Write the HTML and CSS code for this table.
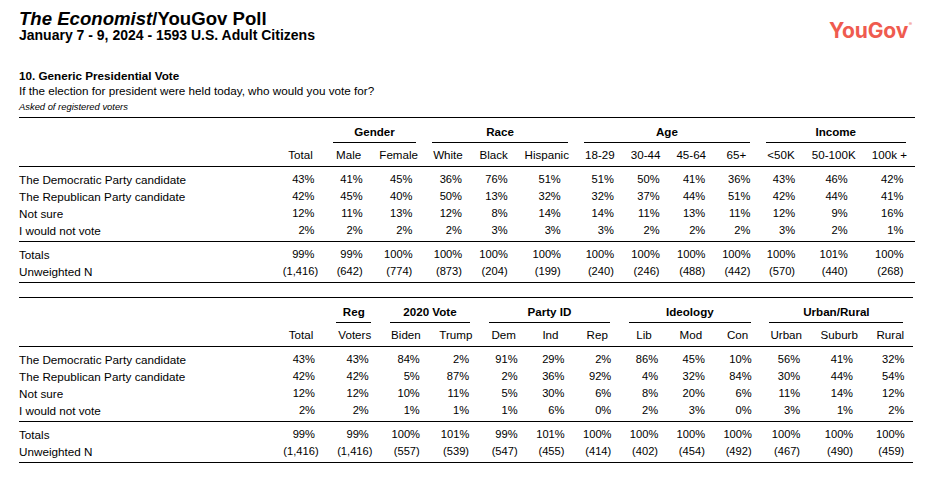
FILE: index.html
```html
<!DOCTYPE html>
<html lang="en">
<head>
<meta charset="utf-8">
<title>The Economist/YouGov Poll</title>
<link rel="stylesheet" href="styles.css">
</head>
<body>
<div class="page">
  <header class="top">
    <div class="titles">
      <h1 class="title"><i>The Economist</i>/YouGov Poll</h1>
      <div class="subtitle">January 7 - 9, 2024 - 1593 U.S. Adult Citizens</div>
    </div>
    <div class="logo">YouGov<span class="reg">®</span></div>
  </header>
  <h2 class="q-title">10. Generic Presidential Vote</h2>
  <p class="q-text">If the election for president were held today, who would you vote for?</p>
  <p class="q-note">Asked of registered voters</p>

  <section class="tbl t1">
    <div class="row grp">
      <div class="g c3-4">Gender</div>
      <div class="g c5-7">Race</div>
      <div class="g c8-11">Age</div>
      <div class="g c12-14">Income</div>
    </div>
    <div class="row hdr">
      <div></div><div>Total</div><div>Male</div><div>Female</div><div>White</div><div>Black</div><div>Hispanic</div><div>18-29</div><div>30-44</div><div>45-64</div><div>65+</div><div>&lt;50K</div><div>50-100K</div><div>100k +</div>
    </div>
    <div class="body">
      <div class="row"><div class="lab">The Democratic Party candidate</div><div class="c">43%</div><div class="c">41%</div><div class="c">45%</div><div class="c">36%</div><div class="c">76%</div><div class="c">51%</div><div class="c">51%</div><div class="c">50%</div><div class="c">41%</div><div class="c">36%</div><div class="c">43%</div><div class="c">46%</div><div class="c">42%</div></div>
      <div class="row"><div class="lab">The Republican Party candidate</div><div class="c">42%</div><div class="c">45%</div><div class="c">40%</div><div class="c">50%</div><div class="c">13%</div><div class="c">32%</div><div class="c">32%</div><div class="c">37%</div><div class="c">44%</div><div class="c">51%</div><div class="c">42%</div><div class="c">44%</div><div class="c">41%</div></div>
      <div class="row"><div class="lab">Not sure</div><div class="c">12%</div><div class="c">11%</div><div class="c">13%</div><div class="c">12%</div><div class="c">8%</div><div class="c">14%</div><div class="c">14%</div><div class="c">11%</div><div class="c">13%</div><div class="c">11%</div><div class="c">12%</div><div class="c">9%</div><div class="c">16%</div></div>
      <div class="row"><div class="lab">I would not vote</div><div class="c">2%</div><div class="c">2%</div><div class="c">2%</div><div class="c">2%</div><div class="c">3%</div><div class="c">3%</div><div class="c">3%</div><div class="c">2%</div><div class="c">2%</div><div class="c">2%</div><div class="c">3%</div><div class="c">2%</div><div class="c">1%</div></div>
    </div>
    <div class="foot">
      <div class="row"><div class="lab">Totals</div><div class="c">99%</div><div class="c">99%</div><div class="c">100%</div><div class="c">100%</div><div class="c">100%</div><div class="c">100%</div><div class="c">100%</div><div class="c">100%</div><div class="c">100%</div><div class="c">100%</div><div class="c">100%</div><div class="c">101%</div><div class="c">100%</div></div>
      <div class="row"><div class="lab">Unweighted N</div><div class="c">(1,416)</div><div class="c">(642)</div><div class="c">(774)</div><div class="c">(873)</div><div class="c">(204)</div><div class="c">(199)</div><div class="c">(240)</div><div class="c">(246)</div><div class="c">(488)</div><div class="c">(442)</div><div class="c">(570)</div><div class="c">(440)</div><div class="c">(268)</div></div>
    </div>
  </section>

  <section class="tbl t2">
    <div class="row grp">
      <div class="g c3-3">Reg</div>
      <div class="g c4-5">2020 Vote</div>
      <div class="g c6-8">Party ID</div>
      <div class="g c9-11">Ideology</div>
      <div class="g c12-14">Urban/Rural</div>
    </div>
    <div class="row hdr">
      <div></div><div>Total</div><div>Voters</div><div>Biden</div><div>Trump</div><div>Dem</div><div>Ind</div><div>Rep</div><div>Lib</div><div>Mod</div><div>Con</div><div>Urban</div><div>Suburb</div><div>Rural</div>
    </div>
    <div class="body">
      <div class="row"><div class="lab">The Democratic Party candidate</div><div class="c">43%</div><div class="c">43%</div><div class="c">84%</div><div class="c">2%</div><div class="c">91%</div><div class="c">29%</div><div class="c">2%</div><div class="c">86%</div><div class="c">45%</div><div class="c">10%</div><div class="c">56%</div><div class="c">41%</div><div class="c">32%</div></div>
      <div class="row"><div class="lab">The Republican Party candidate</div><div class="c">42%</div><div class="c">42%</div><div class="c">5%</div><div class="c">87%</div><div class="c">2%</div><div class="c">36%</div><div class="c">92%</div><div class="c">4%</div><div class="c">32%</div><div class="c">84%</div><div class="c">30%</div><div class="c">44%</div><div class="c">54%</div></div>
      <div class="row"><div class="lab">Not sure</div><div class="c">12%</div><div class="c">12%</div><div class="c">10%</div><div class="c">11%</div><div class="c">5%</div><div class="c">30%</div><div class="c">6%</div><div class="c">8%</div><div class="c">20%</div><div class="c">6%</div><div class="c">11%</div><div class="c">14%</div><div class="c">12%</div></div>
      <div class="row"><div class="lab">I would not vote</div><div class="c">2%</div><div class="c">2%</div><div class="c">1%</div><div class="c">1%</div><div class="c">1%</div><div class="c">6%</div><div class="c">0%</div><div class="c">2%</div><div class="c">3%</div><div class="c">0%</div><div class="c">3%</div><div class="c">1%</div><div class="c">2%</div></div>
    </div>
    <div class="foot">
      <div class="row"><div class="lab">Totals</div><div class="c">99%</div><div class="c">99%</div><div class="c">100%</div><div class="c">101%</div><div class="c">99%</div><div class="c">101%</div><div class="c">100%</div><div class="c">100%</div><div class="c">100%</div><div class="c">100%</div><div class="c">100%</div><div class="c">100%</div><div class="c">100%</div></div>
      <div class="row"><div class="lab">Unweighted N</div><div class="c">(1,416)</div><div class="c">(1,416)</div><div class="c">(557)</div><div class="c">(539)</div><div class="c">(547)</div><div class="c">(455)</div><div class="c">(414)</div><div class="c">(402)</div><div class="c">(454)</div><div class="c">(492)</div><div class="c">(467)</div><div class="c">(490)</div><div class="c">(459)</div></div>
    </div>
  </section>
</div>
</body>
</html>
```

FILE: styles.css
```css
html, body {
  margin: 0;
  background: #fff;
}
body {
  font-family: "Liberation Sans", Arial, Helvetica, sans-serif;
  color: #000;
}
.page {
  padding: 11px 0 0 19px;
  width: 896px;
}
.top {
  display: flex;
  justify-content: space-between;
  align-items: flex-start;
}
.title {
  margin: 0;
  font-size: 18.6px;
  line-height: 16.5px;
  font-weight: bold;
}
.subtitle {
  font-size: 14px;
  line-height: 14px;
  font-weight: bold;
}
.logo {
  margin-top: 10.4px;
  margin-right: 3px;
  font-family: Inter, "Liberation Sans", sans-serif;
  font-weight: 700;
  font-size: 21px;
  line-height: 20px;
  letter-spacing: -0.1px;
  color: #ef5b4f;
}
.reg {
  font-size: 5px;
  line-height: 0;
  vertical-align: 12px;
  margin-left: 0.5px;
  color: #f28a80;
}
.q-title {
  margin: 27.5px 0 0;
  font-size: 11.7px;
  line-height: 14px;
  font-weight: bold;
}
.q-text {
  margin: 0.5px 0 0;
  font-size: 11.7px;
  line-height: 14px;
}
.q-note {
  margin: 3.3px 0 0;
  font-size: 9.4px;
  line-height: 12px;
  font-style: italic;
}
.tbl {
  margin-top: 4.3px;
  border-top: 1px solid #000;
  border-bottom: 1px solid #000;
  width: 896px;
}
.t2 {
  width: 893.7px;
  margin-top: 14px;
}
.row {
  display: grid;
  align-items: start;
}
.t1 .row {
  grid-template-columns: 248.33px 35px 30px 38px 30px 30px 45px 30px 30px 30px 29px 29px 45px 35px;
  column-gap: 15.67px;
}
.t2 .row {
  grid-template-columns: 245.7px 35px 35px 29.4px 31.6px 28px 28px 28px 28px 28px 28px 31.3px 37px 28px;
  column-gap: 18.8px;
}
.grp {
  padding-top: 5px;
}
.g {
  margin: 0 1px 0 -1px;
  padding-bottom: 1.5px;
  border-bottom: 1px solid #000;
  font-weight: bold;
  font-size: 11.6px;
  line-height: 17px;
  text-align: center;
  white-space: nowrap;
}
.c3-3 { grid-column: 3 / 4; }
.c3-4 { grid-column: 3 / 5; }
.c4-5 { grid-column: 4 / 6; }
.c5-7 { grid-column: 5 / 8; }
.c6-8 { grid-column: 6 / 9; }
.c8-11 { grid-column: 8 / 12; }
.c9-11 { grid-column: 9 / 12; }
.c12-14 { grid-column: 12 / 15; }
.hdr {
  padding-top: 3.5px;
  padding-bottom: 2.5px;
  border-bottom: 1px solid #000;
}
.hdr > div {
  height: 17px;
  font-size: 11.6px;
  line-height: 17px;
  text-align: center;
  white-space: nowrap;
}
.body {
  padding: 4px 0 2px;
  border-bottom: 1px solid #000;
}
.foot {
  padding: 4px 0 2.5px;
}
.lab {
  height: 17px;
  font-size: 11.7px;
  line-height: 17px;
  white-space: nowrap;
}
.c {
  justify-self: center;
  height: 17px;
  min-width: 28px;
  text-align: right;
  font-size: 11.15px;
  line-height: 17px;
  white-space: nowrap;
}
```
